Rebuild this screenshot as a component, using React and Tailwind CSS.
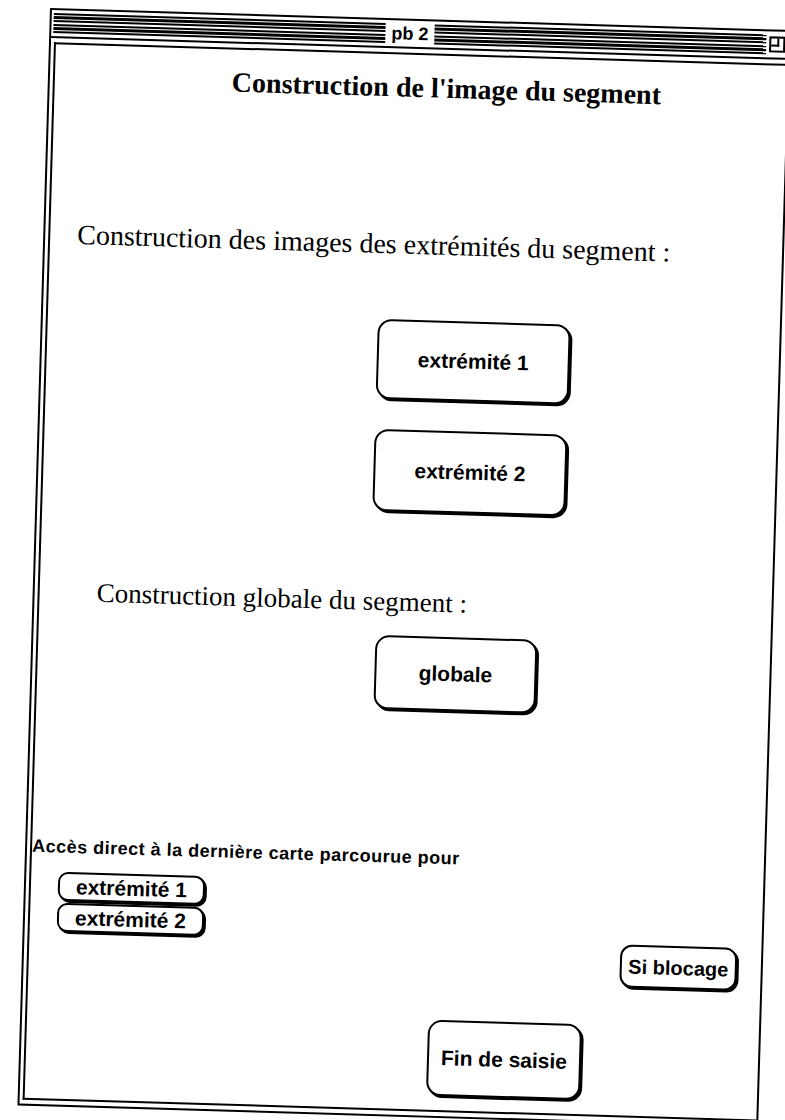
import React from 'react';

const Stripes = ({ className = '' }) => (
  <div className={`flex flex-col gap-[1.5px] ${className}`}>
    {[0, 1, 2, 3, 4, 5].map((i) => (
      <div key={i} className="h-[2.2px] bg-black" />
    ))}
  </div>
);

const RoundButton = ({ children, className = '' }) => (
  <button
    type="button"
    className={`flex shrink-0 items-center justify-center border-2 border-black bg-white font-['Liberation_Sans',Arial,sans-serif] font-bold text-black shadow-[2px_2px_0_0_#000] ${className}`}
  >
    {children}
  </button>
);

export default function App() {
  return (
    <div className="h-[1120px] w-[785px] overflow-hidden bg-white pl-[50px] pt-[8px]">
      {/* fenêtre de la pile, légèrement penchée comme sur le scan */}
      <div className="flex h-[1098px] w-[741px] origin-top-left rotate-[1.7deg] flex-col border-2 border-black bg-white">
        <div className="flex h-[28px] shrink-0 items-center border-b-2 border-black pl-[2px]">
          <Stripes className="flex-1" />
          <span className="px-[6px] font-['Liberation_Sans',Arial,sans-serif] text-[18px] font-bold leading-none text-black">
            pb 2
          </span>
          <Stripes className="flex-1" />
          <div className="mx-[3px] h-[16px] w-[16px] border-2 border-black bg-white">
            <div className="h-[8px] w-[8px] border-r-2 border-b-2 border-black" />
          </div>
        </div>

        <div className="mb-[4px] ml-[3px] mt-[4px] flex flex-1 flex-col border-b-2 border-l-2 border-t-2 border-black text-black">
          <h1 className="ml-[177px] mt-[17px] whitespace-nowrap font-['Liberation_Serif',serif] text-[28px] font-bold leading-[32px]">
            Construction de l'image du segment
          </h1>

          <p className="ml-[27px] mt-[125px] whitespace-nowrap font-['Liberation_Serif',serif] text-[28px] leading-[32px]">
            Construction des images des extrémités du segment :
          </p>

          <RoundButton className="ml-[330px] mt-[59px] h-[80px] w-[193px] rounded-[14px] text-[21px]">
            extrémité 1
          </RoundButton>
          <RoundButton className="ml-[330px] mt-[30px] h-[82px] w-[193px] rounded-[14px] text-[21px]">
            extrémité 2
          </RoundButton>

          <p className="ml-[57px] mt-[74px] whitespace-nowrap font-['Liberation_Serif',serif] text-[27px] leading-[32px]">
            Construction globale du segment :
          </p>

          <RoundButton className="ml-[337px] mt-[18px] h-[74px] w-[162px] rounded-[14px] text-[21px]">
            globale
          </RoundButton>

          <p className="mt-[136px] whitespace-nowrap font-['Liberation_Sans',Arial,sans-serif] text-[18px] font-bold leading-[22px] tracking-[0.5px]">
            Accès direct à la dernière carte parcourue pour
          </p>

          <RoundButton className="ml-[27px] mt-[14px] h-[29px] w-[147px] rounded-[10px] text-[21px]">
            extrémité 1
          </RoundButton>
          <div className="mt-[2px] flex items-start">
            <RoundButton className="ml-[27px] h-[29px] w-[147px] rounded-[10px] text-[21px]">
              extrémité 2
            </RoundButton>
            <RoundButton className="ml-[417px] mt-[25px] h-[43px] w-[117px] rounded-[12px] text-[20px]">
              Si blocage
            </RoundButton>
          </div>

          <RoundButton className="ml-[401px] mt-[38px] h-[76px] w-[154px] rounded-[14px] text-[21px]">
            Fin de saisie
          </RoundButton>
        </div>
      </div>
    </div>
  );
}
